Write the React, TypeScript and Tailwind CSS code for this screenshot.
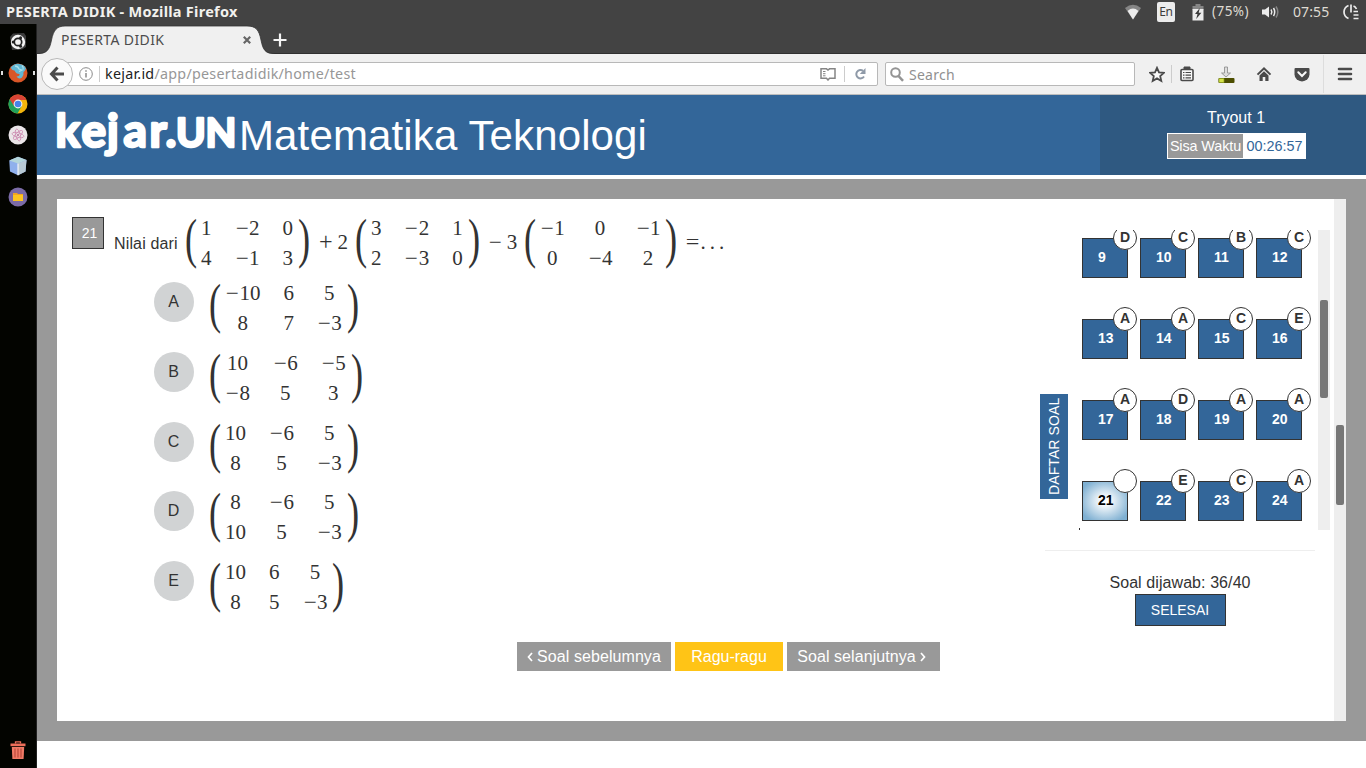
import React from "react";

const UI = "font-['Noto_Sans','Open_Sans',sans-serif]";

/* ---------- System bar ---------- */
function SystemBar() {
  return (
    <div className={`flex h-6 shrink-0 items-center bg-[#434343] ${UI}`}>
      <span className="ml-[6px] w-[260px] whitespace-nowrap pb-[2px] text-[14.500px] leading-[22px] font-bold tracking-[0.270px] text-[#f2f1ee]">
        PESERTA DIDIK - Mozilla Firefox
      </span>
      <div className="ml-auto flex h-6 items-center pr-[7px] text-[14px] text-[#dfdbd2]">
        <svg className="mr-[15px]" width="18" height="18" viewBox="0 0 18 18">
          <path d="M1 5 Q9 -1.5 17 5 L9 16.5 Z" fill="#858585" />
          <path d="M3.6 8 Q9 3.2 14.4 8 L9 16.5 Z" fill="#ececec" />
        </svg>
        <span className="mr-[17px] flex h-5 w-[18px] items-center justify-center rounded-[2px] bg-[#ececec] text-[12px] tracking-[-0.3px] text-[#3c3c3c]">En</span>
        <svg className="mr-[8px]" width="12" height="18" viewBox="0 0 12 18">
          <path d="M3.5 1h5v2h3v4H.5V3h3z" fill="#858585" />
          <path d="M.5 6h11v11.5H.5z" fill="#ececec" />
          <path d="M7.8 5 3 11h2.5l-1.3 5L9.4 9.800H6.700z" fill="#3c3c3c" />
        </svg>
        <span className="mr-[9px] w-[40px] whitespace-nowrap pb-px text-[13.500px] tracking-[0.450px]">(75%)</span>
        <svg className="mr-[12px]" width="20" height="16" viewBox="0 0 20 16" fill="none" strokeWidth="1.500">
          <path d="M1 5.500h3L8 2.500v11L4 10.500H1z" fill="#ececec" />
          <path d="M10 5.500q1.600 2.500 0 5M12.500 4q2.400 4 0 8" stroke="#ececec" />
          <path d="M15 2.500q3.600 5.500 0 11" stroke="#858585" />
        </svg>
        <span className="mr-[14px] w-[36px] whitespace-nowrap pb-[2px] text-[14px] tracking-[0.100px]">07:55</span>
        <svg width="16" height="18" viewBox="0 0 16 18" fill="none" stroke="#ececec" strokeWidth="1.700">
          <path d="M5.500 2.500Q1 4.500 1 9t4.500 6.500M8 1.500v8M10.500 8.500H15M10.500 12H15.500M10.500 15.500h5" />
          <path d="M10.500 3q2 .8 3 3" />
        </svg>
      </div>
    </div>
  );
}

/* ---------- Launcher ---------- */
function Launcher() {
  return (
    <div className="flex w-[37px] shrink-0 flex-col items-center border-r border-[#222] bg-[#030400] pt-2">
      <div className="flex flex-col gap-[11px]">
        <svg width="20" height="20" viewBox="0 0 20 20">
          <path d="M2 5 5 1.500 16 1l2 3v11l-4 2.500L4 18z" fill="#3c3c3c" />
          <circle cx="10" cy="10" r="7.200" fill="#f4f4f4" />
          <circle cx="10" cy="10" r="3.700" fill="none" stroke="#222" strokeWidth="1.700" />
          <g fill="#222"><circle cx="5.200" cy="10" r="1.500" /><circle cx="12.600" cy="5.700" r="1.500" /><circle cx="12.600" cy="14.300" r="1.500" /></g>
        </svg>
        <div className="relative h-5 w-5">
          <svg width="20" height="20" viewBox="0 0 20 20">
            <circle cx="10" cy="10" r="9.500" fill="#d95627" />
            <path d="M2.500 4.500Q6 .5 10 .7 16 1 18 5.500 17 8 15.500 9 16 12 14 14.500 11 17 8.500 13.500 12 13 11.500 11 8 11 6.500 7.500 3.500 7 2.500 4.500z" fill="#62b7d4" />
            <path d="M7 3q3 0 4 3l3 1-3 1.500M14 2.500q2 2 1 4" fill="none" stroke="#a5e0ea" strokeWidth="1.300" />
          </svg>
          <span className="absolute top-[8px] -left-[7px] h-1 w-[2px] bg-[#ddd]" />
          <span className="absolute top-[8px] left-[25px] h-1 w-[2px] bg-[#ddd]" />
        </div>
        <svg width="20" height="20" viewBox="0 0 20 20">
          <circle cx="10" cy="10" r="9.500" fill="#f2b50c" />
          <path d="M10 10 1.700 5.200A9.500 9.500 0 0 0 9.500 19.500L13.800 12z" fill="#1fa15c" />
          <path d="M1.700 5.200A9.500 9.500 0 0 1 18.500 6H10L6 12z" fill="#d94435" />
          <circle cx="10" cy="10" r="4.400" fill="#f2f2f2" />
          <circle cx="10" cy="10" r="3.300" fill="#4683ea" />
        </svg>
        <svg width="20" height="20" viewBox="0 0 20 20" fill="none">
          <circle cx="10" cy="10" r="9.500" fill="#ebe6e8" />
          <g stroke="#cf8fb4" strokeWidth=".9">
            <ellipse cx="10" cy="10" rx="6" ry="2.300" transform="rotate(15 10 10)" />
            <ellipse cx="10" cy="10" rx="6" ry="2.300" transform="rotate(75 10 10)" />
            <ellipse cx="10" cy="10" rx="6" ry="2.300" transform="rotate(135 10 10)" />
          </g>
          <circle cx="10" cy="10" r="1" fill="#b5709a" />
        </svg>
        <svg width="20" height="20" viewBox="0 0 20 20">
          <path d="M10 .8 18.500 4 17.500 15.500 10 19.300 2 15.500 1.300 4.500z" fill="#8fb0ec" />
          <path d="M10 .8 18.500 4 10 7.500 1.300 4.500z" fill="#b4d6da" />
          <path d="M10 7.500 18.500 4 17.500 15.500 10 19.300z" fill="#b8c9d4" />
          <path d="M10 7.500v11.800" stroke="#fff" strokeWidth="1" />
        </svg>
        <svg width="20" height="20" viewBox="0 0 20 20">
          <circle cx="10" cy="10" r="9.500" fill="#7b6ba6" />
          <path d="M5 6h4l1 1h5v7H5z" fill="#f2a51e" />
          <path d="M5 8h10v6H5z" fill="#fdc51f" />
        </svg>
      </div>
      <svg className="mt-auto mb-[8px]" width="18" height="20" viewBox="0 0 18 20">
        <path d="M6.500 3.500V1.800h5v1.700" fill="none" stroke="#ee6f5b" strokeWidth="1.300" />
        <path d="M1.500 3.500h15v2.700H1.500z" fill="#ee6f5b" />
        <path d="M2.800 7h12.400l-.6 12H3.400z" fill="#f07a66" />
        <path d="M6 8.500v9M9 8.500v9M12 8.500v9" stroke="#b94a3c" strokeWidth="1.200" />
      </svg>
    </div>
  );
}

/* ---------- Browser chrome ---------- */
function TabStrip() {
  return (
    <div className={`relative flex h-[30px] shrink-0 items-center border-b border-[#303030] bg-[#434343] ${UI}`}>
      <svg className="absolute top-0 left-0" width="240" height="30" viewBox="0 0 240 30">
        <path d="M0 30C10 30 12.500 26 14.500 16S20 2 28 2H210C219 2 222 6 224 16s4 14 14 14z" fill="#f0f0f0" />
        <path d="M0 29.500C10 29.500 12.500 26 14.500 16S20 2 28 2H210C219 2 222 6 224 16s4 13.500 14 13.500" fill="none" stroke="#333" strokeWidth=".8" />
      </svg>
      <span className="relative mt-[2px] ml-[24px] w-[180px] text-[14px] tracking-[0.380px] text-[#4c4c4c]">PESERTA DIDIK</span>
      <svg className="relative mt-[2px]" width="12" height="12" viewBox="0 0 12 12"><path d="m2.800 2.800 6.400 6.400m0-6.400-6.400 6.400" stroke="#666" strokeWidth="2.200" /></svg>
      <svg className="relative mt-[2px] ml-[20px]" width="14" height="14" viewBox="0 0 14 14"><path d="M7 .5v13M.5 7h13" stroke="#f4f4f4" strokeWidth="2.200" /></svg>
    </div>
  );
}

function Toolbar() {
  return (
    <div className={`flex h-[41px] shrink-0 items-center border-b border-[#bdbdbd] bg-[#f0f0f0] ${UI}`}>
      <div className="z-10 ml-[4px] flex size-8 shrink-0 items-center justify-center rounded-full border border-[#b8b8b8] bg-[#fafafa]">
        <svg width="16" height="16" viewBox="0 0 16 16" fill="none" stroke="#4a4a4a" strokeWidth="3"><path d="M8.500 1.500 2.500 8l6 6.500M3 8h12" /></svg>
      </div>
      <div className="-ml-[6px] flex h-6 w-[811px] shrink-0 items-center rounded-r-[2px] border border-[#b8b8b8] bg-white">
        <svg className="ml-[11px]" width="14" height="14" viewBox="0 0 14 14" fill="none" stroke="#8a8a8a"><circle cx="7" cy="7" r="6.300" /><path d="M7 6v4.500M7 3.300v1.500" strokeWidth="1.500" /></svg>
        <span className="mr-[5px] ml-[6px] h-4 w-px bg-[#ccc]" />
        <span className="text-[14.300px] tracking-[0.260px] whitespace-nowrap text-[#979797]"><span className="text-[#222]">kejar.id</span>/app/pesertadidik/home/test</span>
        <svg className="ml-auto" width="16" height="14" viewBox="0 0 16 14" fill="none" stroke="#858585" strokeWidth="1.500">
          <path d="M6.500 11.300H1V1.800h5.500L8 3l1.500-1.200H15v9.500H9.500L8 13z" /><path d="M3 4.500h2.500M3 6.700h2.500M3 8.800h2.500" strokeWidth="1" />
        </svg>
        <span className="mr-[9px] ml-[8px] h-4 w-px bg-[#ccc]" />
        <svg className="mr-[10px]" width="13" height="14" viewBox="0 0 13 14"><path d="M10 9.500A4.200 4.200 0 1 1 9 3.800" fill="none" stroke="#8f9aa8" strokeWidth="2" /><path d="M11.500 1v6H5.800z" fill="#8f9aa8" /></svg>
      </div>
      <div className="ml-[7px] flex h-6 w-[250px] shrink-0 items-center rounded-[2px] border border-[#b8b8b8] bg-white">
        <svg className="ml-[4px]" width="14" height="15" viewBox="0 0 14 15" fill="none" stroke="#949494"><circle cx="5.500" cy="5.500" r="4.300" strokeWidth="2" /><path d="m8.500 9 4.500 4.800" strokeWidth="2.500" /></svg>
        <span className="ml-[5px] text-[14px] tracking-[0.250px] text-[#909090]">Search</span>
      </div>
      <svg className="ml-[14px] shrink-0" width="16" height="17" viewBox="0 0 16 17"><path d="m8 1.800 2 4.500 4.900.5-3.700 3.300 1.100 4.900L8 12.400l-4.300 2.600 1.100-4.900L1.100 6.800 6 6.300z" fill="#fafafa" stroke="#4a4a4a" strokeWidth="1.800" /></svg>
      <span className="mr-[8px] ml-[6px] h-[18px] w-px bg-[#ccc]" />
      <svg className="shrink-0" width="14" height="16" viewBox="0 0 14 16" fill="none" stroke="#4a4a4a"><rect x="1" y="3.500" width="12" height="11" rx="1" fill="#fafafa" strokeWidth="1.600" /><path d="M4 3.500V1h6v2.500z" fill="#4a4a4a" /><path d="M3 6.500h1.500M5.500 6.500H11M3 9.200h1.500M5.500 9.200H11M3 11.900h1.500M5.500 11.900H11" strokeWidth="1.200" /></svg>
      <svg className="ml-[23px] shrink-0" width="18" height="20" viewBox="0 0 18 20">
        <path d="M7.500 3h3v6h3L9 13 4.500 9h3z" fill="#ddd" stroke="#888" strokeWidth=".8" />
        <rect x="1.500" y="14" width="16" height="5" rx="1" fill="#4c4e00" /><path d="M2 14.500h5v4H2z" fill="#d5e34a" stroke="#8b9b1c" strokeWidth=".7" />
      </svg>
      <svg className="ml-[21px] shrink-0" width="16" height="16" viewBox="0 0 16 16"><path d="M8 1 .8 8l1.400 1.300L8 3.800l5.800 5.500L15.200 8z" fill="#4a4a4a" /><path d="M3.500 9.500 8 5.300l4.500 4.200V15H9.300v-4H6.700v4H3.500z" fill="#4a4a4a" /></svg>
      <svg className="ml-[22px] shrink-0" width="16" height="15" viewBox="0 0 16 15"><path d="M1.500 1h13q1 0 1 1v5.200A7.500 7.300 0 0 1 .5 7.200V2q0-1 1-1z" fill="#4a4a4a" /><path d="m4.300 5.300L8 9l3.700-3.700" fill="none" stroke="#fafafa" strokeWidth="2" strokeLinecap="round" /></svg>
      <span className="mr-[13px] ml-[13px] h-[38px] w-px bg-[#ddd]" />
      <svg className="shrink-0" width="16" height="14" viewBox="0 0 16 14" fill="none" stroke="#4a4a4a" strokeWidth="2.600" strokeLinecap="round"><path d="M2 2h12M2 7h12M2 12h12" /></svg>
    </div>
  );
}

/* ---------- Math ---------- */
function Minus() {
  return <span className="inline-block w-[14.4px] scale-x-[1.1] text-center">−</span>;
}

function Num({ value }: { value: number }) {
  return <span className="whitespace-nowrap">{value < 0 && <Minus />}{Math.abs(value)}</span>;
}

function Paren({ side }: { side: "(" | ")" }) {
  return (
    <span className="flex h-[52px] w-4 items-center justify-center">
      <span className={`origin-center -translate-y-[4px] scale-x-[0.660] text-[55px] leading-[52px] ${side === "(" ? "-translate-x-[2px]" : "translate-x-[3px]"}`}>{side}</span>
    </span>
  );
}

function Matrix({ rows }: { rows: number[][] }) {
  return (
    <span className="inline-flex items-center font-['Liberation_Serif',serif] text-[21px] text-[#333]">
      <Paren side="(" />
      <span className="grid grid-cols-[auto_auto_auto] justify-items-center gap-x-[23px] leading-[30px]">
        {rows.flat().map((n, i) => <Num key={i} value={n} />)}
      </span>
      <Paren side=")" />
    </span>
  );
}

/* ---------- Quiz ---------- */
const options = [
  { key: "A", rows: [[-10, 6, 5], [8, 7, -3]] },
  { key: "B", rows: [[10, -6, -5], [-8, 5, 3]] },
  { key: "C", rows: [[10, -6, 5], [8, 5, -3]] },
  { key: "D", rows: [[8, -6, 5], [10, 5, -3]] },
  { key: "E", rows: [[10, 6, 5], [8, 5, -3]] },
];

const answers = ["D", "C", "B", "C", "A", "A", "C", "E", "A", "D", "A", "A", "", "E", "C", "A"];

function Header() {
  return (
    <div className="flex h-20 shrink-0 bg-[#336699] text-white">
      <div className="flex flex-1">
        <svg className="mt-[6px] ml-[18px] shrink-0 overflow-visible" width="184" height="68" viewBox="0 -5 184 68">
          <g fill="#fff" stroke="#fff" strokeWidth="2.600" strokeLinejoin="round" fontFamily="Lato, sans-serif" fontWeight="700">
            <text x="0.500 26.500 52 68.500 94.500 110.500" y="41" fontSize="46">kejar.</text>
            <text x="121 150.500" y="41" fontSize="40">UN</text>
          </g>
        </svg>
        <span className="mt-[15px] text-[42px] leading-[52px] tracking-[0.130px] whitespace-nowrap">Matematika Teknologi</span>
      </div>
      <div className="flex w-[266px] flex-col items-center bg-[#2f5981] pt-[11px] pl-[6px]">
        <span className="text-[16px] leading-6">Tryout 1</span>
        <div className="mt-[3px] flex h-[26px] items-stretch border border-white bg-white text-[14.400px] leading-6 whitespace-nowrap">
          <span className="w-[75px] bg-[#999] pl-px text-center tracking-[-0.1px]">Sisa Waktu</span>
          <span className="w-[62px] pl-[2px] text-center text-[#336699]">00:26:57</span>
        </div>
      </div>
    </div>
  );
}

function Question() {
  return (
    <div className="flex w-[983px] flex-col pl-[15px]">
      <div className="flex pt-[14px]">
        <span className="mt-[4px] flex size-8 items-center justify-center border border-[#333] bg-[#999] pl-[3px] text-[14px] text-white">21</span>
        <div className="ml-[10px] flex items-center text-[16px] text-[#333]">
          <span className="w-[71px] pt-[2px] tracking-[0.150px] whitespace-nowrap">Nilai dari</span>
          <Matrix rows={[[1, -2, 0], [4, -1, 3]]} />
          <span className="flex w-[46px] justify-center gap-[6px] pl-[4px] font-['Liberation_Serif',serif] text-[21px]"><span className="scale-[1.15]">+</span><span>2</span></span>
          <Matrix rows={[[3, -2, 1], [2, -3, 0]]} />
          <span className="flex w-[45px] justify-center gap-[4px] pl-[3px] font-['Liberation_Serif',serif] text-[21px]"><Minus /><span>3</span></span>
          <Matrix rows={[[-1, 0, -1], [0, -4, 2]]} />
          <span className="ml-[9px] flex font-['Liberation_Serif',serif] text-[21px]"><span className="w-[15px] scale-x-[1.15] text-center">=</span><span className="tracking-[4px]">...</span></span>
        </div>
      </div>
      <div className="mt-[9px] flex flex-col gap-[17.750px] pl-[82px]">
        {options.map((o) => (
          <div key={o.key} className="flex h-[52px] items-start">
            <span className="flex size-10 items-center justify-center rounded-full bg-[#d1d3d4] pr-[1px] text-[16px] text-[#333]">{o.key}</span>
            <span className="-mt-[4px] ml-[15px] flex"><Matrix rows={o.rows} /></span>
          </div>
        ))}
      </div>
      <div className="mt-[29px] ml-[445px] flex gap-1 text-[16px] leading-[29px] whitespace-nowrap text-white">
        <button className="flex h-[29px] w-[154px] items-center justify-center gap-[4px] bg-[#999]">
          <svg width="6" height="10" viewBox="0 0 6 10"><path d="M5 1 1.500 5 5 9" fill="none" stroke="#fff" strokeWidth="1.700" /></svg><span className="tracking-[0.070px]">Soal sebelumnya</span>
        </button>
        <button className="h-[29px] w-[108px] bg-[#ffc416]">Ragu-ragu</button>
        <button className="flex h-[29px] w-[153px] items-center justify-center gap-[4px] bg-[#999] pr-1">
          <span className="tracking-[0.070px]">Soal selanjutnya</span><svg width="6" height="10" viewBox="0 0 6 10"><path d="M1 1 4.500 5 1 9" fill="none" stroke="#fff" strokeWidth="1.700" /></svg>
        </button>
      </div>
    </div>
  );
}

function QuestionList() {
  return (
    <div className="flex flex-1">
      <div className="mt-[195px] flex h-[105px] w-7 shrink-0 rotate-180 items-center justify-center bg-[#336699] text-[14px] tracking-[0.1px] whitespace-nowrap text-white [writing-mode:vertical-rl]">DAFTAR SOAL</div>
      <div className="flex flex-1 flex-col pt-[31px]">
        <div className="flex h-[300px] w-[262px] overflow-hidden">
          <div className="relative w-[250px] pt-2 pl-[14px]">
            <div className="grid grid-cols-[repeat(4,46px)] gap-x-3 gap-y-[41px]">
              {answers.map((a, i) => (
                <div key={i} className={`relative flex h-10 items-center border border-[#333] pb-px pl-[15px] text-[14px] font-bold ${a ? "bg-[#336699] text-white" : "bg-[radial-gradient(ellipse_at_center,#ffffff_12%,#7fb0d2_85%)] text-black"}`}>
                  {i + 9}
                  <span className="absolute -top-[13px] left-[30px] flex size-6 items-center justify-center rounded-full border border-[#333] bg-white pb-px text-[14px] text-[#333]">{a}</span>
                </div>
              ))}
            </div>
            <span className="absolute bottom-0 left-[11px] h-[2px] w-px bg-[#333]" />
          </div>
          <div className="w-3 bg-[#eee] px-[2px] pt-[70px]"><div className="h-[98px] rounded-[2px] bg-[#777]" /></div>
        </div>
        <div className="mt-5 -ml-[23px] w-[270px] border-t border-[#eee]" />
        <div className="-ml-[23px] flex w-[270px] flex-col items-center pt-[21px]">
          <span className="text-[16px] leading-[22px] tracking-[0.080px] text-[#333]">Soal dijawab: 36/40</span>
          <button className="h-8 w-[91px] border border-[#333] bg-[#336699] text-[14px] text-white">SELESAI</button>
        </div>
      </div>
    </div>
  );
}

export default function App() {
  return (
    <div className="flex h-[768px] w-[1366px] flex-col overflow-hidden bg-white font-['Liberation_Sans',Arial,sans-serif]">
      <SystemBar />
      <div className="flex min-h-0 flex-1">
        <Launcher />
        <div className="flex min-w-0 flex-1 flex-col">
          <TabStrip />
          <Toolbar />
          <Header />
          <div className="mt-1 flex h-[562px] bg-[#999] p-5">
            <div className="flex flex-1 bg-white">
              <Question />
              <QuestionList />
              <div className="w-3 bg-[#eee] px-[2px] pt-[226px]"><div className="h-20 rounded-[2px] bg-[#777]" /></div>
            </div>
          </div>
        </div>
      </div>
    </div>
  );
}
